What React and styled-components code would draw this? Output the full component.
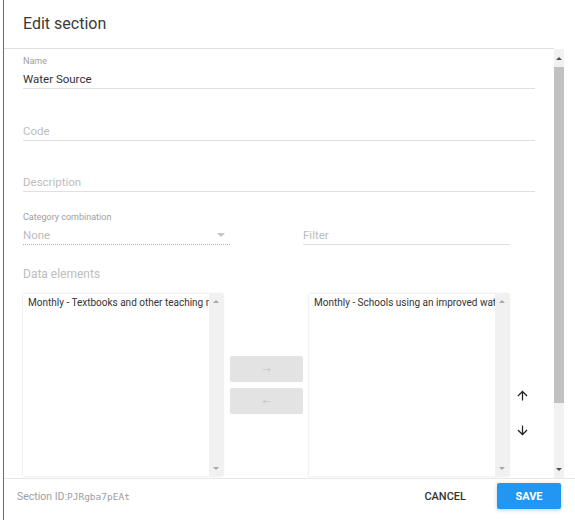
import styled, { createGlobalStyle } from "styled-components"

const GlobalStyle = createGlobalStyle`
  html, body { margin: 0; padding: 0; background: #fff; }
  body { font-family: Roboto, "Liberation Sans", sans-serif; }
`

const Page = styled.div`
  width: 575px;
  height: 520px;
  display: flex;
  padding-left: 3px;
  box-sizing: border-box;
  overflow: hidden;
`

const Dialog = styled.div`
  flex: 1;
  display: flex;
  flex-direction: column;
  border-left: 1px solid #6a6a6a;
  background: #fff;
  min-width: 0;
`

const Header = styled.div`
  height: 48px;
  margin-right: 21px;
  border-bottom: 1px solid #e0e0e0;
  padding-left: 19px;
  display: flex;
  align-items: center;
`

const Title = styled.h3`
  margin: 0 0 2px;
  font-size: 16px;
  font-weight: 400;
  color: #3a3a3a;
`

const Middle = styled.div`
  flex: 1;
  display: flex;
  min-height: 0;
`

const Content = styled.div`
  flex: 1;
  overflow: hidden;
  padding: 7px 19px 0 19px;
`

const Scrollbar = styled.div`
  width: 10px;
  margin-right: 11px;
  background: #f1f1f1;
  display: flex;
  flex-direction: column;
`

const ScrollArrow = styled.div`
  height: 18px;
  display: flex;
  align-items: center;
  justify-content: center;
  &::after {
    content: "";
    border-left: 3px solid transparent;
    border-right: 3px solid transparent;
    ${p => p.down ? "border-top: 3px solid #505050;" : "border-bottom: 3px solid #505050;"}
  }
`

const Thumb = styled.div`
  height: 336px;
  background: #c1c1c1;
`

const Track = styled.div`
  flex: 1;
`

const Field = styled.div`
  margin-top: ${p => p.gap || 0}px;
  width: ${p => p.width || "auto"};
`

const Label = styled.div`
  font-size: 9px;
  line-height: 11px;
  color: #9e9e9e;
  margin-bottom: 2px;
`

const InputRow = styled.div`
  height: 19px;
  display: flex;
  align-items: center;
  justify-content: space-between;
  border-bottom: 1px ${p => p.dotted ? "dotted #b0b0b0" : "solid #e0e0e0"};
  font-size: 11.5px;
  color: ${p => p.placeholder ? "#bdbdbd" : "#333"};
`

const Caret = styled.span`
  margin-right: 5px;
  border-left: 4px solid transparent;
  border-right: 4px solid transparent;
  border-top: 4px solid #c4c4c4;
`

const Row = styled.div`
  display: flex;
  align-items: flex-end;
  gap: 73px;
  margin-top: 20px;
`

const SectionLabel = styled.div`
  margin-top: 21px;
  font-size: 12px;
  line-height: 16px;
  color: #bdbdbd;
`

const ListsRow = styled.div`
  display: flex;
  margin-top: 12px;
`

const ListBox = styled.div`
  width: 200px;
  height: 182px;
  display: flex;
  background: #fff;
  box-shadow: 0 0 2px rgba(0, 0, 0, 0.18);
`

const ListItems = styled.div`
  flex: 1;
  overflow: hidden;
  padding: 1px 0 0 5px;
`

const ListItem = styled.div`
  font-size: 10px;
  line-height: 16px;
  color: #333;
  white-space: nowrap;
`

const ListScroll = styled.div`
  width: 14px;
  background: #f1f1f1;
  display: flex;
  flex-direction: column;
  justify-content: space-between;
  align-items: center;
  padding: 6px 0;
  &::before, &::after {
    content: "";
    border-left: 3px solid transparent;
    border-right: 3px solid transparent;
  }
  &::before { border-bottom: 3px solid #a8a8a8; }
  &::after { border-top: 3px solid #a8a8a8; }
`

const TransferColumn = styled.div`
  display: flex;
  flex-direction: column;
  justify-content: center;
  gap: 6px;
  margin: 0 6px 0 7px;
`

const TransferButton = styled.button`
  width: 73px;
  height: 26px;
  border: none;
  border-radius: 2px;
  background: #e3e3e3;
  color: #c9c9c9;
  font-size: 10px;
  font-family: "DejaVu Sans", sans-serif;
  padding: 0;
`

const OrderColumn = styled.div`
  width: 36px;
  display: flex;
  flex-direction: column;
  align-items: center;
  padding-top: 91px;
  gap: 14px;
`

const OrderButton = styled.div`
  height: 21px;
  display: flex;
  align-items: center;
  justify-content: center;
`

const Footer = styled.div`
  height: 42px;
  border-top: 1px solid #e6e6e6;
  display: flex;
  align-items: flex-start;
  padding: 4px 14px 0 13px;
  box-sizing: border-box;
`

const SectionId = styled.div`
  flex: 1;
  font-size: 10.5px;
  line-height: 14px;
  color: #9e9e9e;
  margin-top: 7px;
`

const Mono = styled.span`
  font-family: "DejaVu Sans Mono", "Liberation Mono", monospace;
  font-size: 9.5px;
`

const FlatButton = styled.button`
  border: none;
  background: none;
  font-family: inherit;
  font-size: 11px;
  font-weight: 500;
  color: #333;
  padding: 0 16px;
  height: 26px;
  margin-right: 15px;
`

const RaisedButton = styled.button`
  border: none;
  border-radius: 2px;
  width: 64px;
  height: 26px;
  background: #2196f3;
  color: #fff;
  font-family: inherit;
  font-size: 11px;
  font-weight: 700;
  box-shadow: 0 1px 4px rgba(0, 0, 0, 0.2);
`

const Arrow = ({ up }) => (
  <svg width="15" height="15" viewBox="0 0 24 24">
    <path
      d="M4 12l1.41 1.41L11 7.83V20h2V7.83l5.58 5.59L20 12l-8-8-8 8z"
      fill="#222"
      transform={up ? undefined : "rotate(180 12 12)"}
    />
  </svg>
)

const App = () => (
  <>
    <GlobalStyle />
    <Page>
      <Dialog>
        <Header>
          <Title>Edit section</Title>
        </Header>
        <Middle>
          <Content>
            <Field>
              <Label>Name</Label>
              <InputRow>Water Source</InputRow>
            </Field>
            <Field gap={32}>
              <InputRow placeholder>Code</InputRow>
            </Field>
            <Field gap={31}>
              <InputRow placeholder>Description</InputRow>
            </Field>
            <Row>
              <Field width="207px">
                <Label>Category combination</Label>
                <InputRow placeholder dotted>
                  None
                  <Caret />
                </InputRow>
              </Field>
              <Field width="207px">
                <InputRow placeholder>Filter</InputRow>
              </Field>
            </Row>
            <SectionLabel>Data elements</SectionLabel>
            <ListsRow>
              <ListBox>
                <ListItems>
                  <ListItem>Monthly - Textbooks and other teaching materials</ListItem>
                </ListItems>
                <ListScroll />
              </ListBox>
              <TransferColumn>
                <TransferButton>→</TransferButton>
                <TransferButton>←</TransferButton>
              </TransferColumn>
              <ListBox>
                <ListItems>
                  <ListItem>Monthly - Schools using an improved water source</ListItem>
                </ListItems>
                <ListScroll />
              </ListBox>
              <OrderColumn>
                <OrderButton><Arrow up /></OrderButton>
                <OrderButton><Arrow /></OrderButton>
              </OrderColumn>
            </ListsRow>
          </Content>
          <Scrollbar>
            <ScrollArrow />
            <Thumb />
            <Track />
            <ScrollArrow down />
          </Scrollbar>
        </Middle>
        <Footer>
          <SectionId>
            Section ID:<Mono>PJRgba7pEAt</Mono>
          </SectionId>
          <FlatButton>CANCEL</FlatButton>
          <RaisedButton>SAVE</RaisedButton>
        </Footer>
      </Dialog>
    </Page>
  </>
)

export default App
